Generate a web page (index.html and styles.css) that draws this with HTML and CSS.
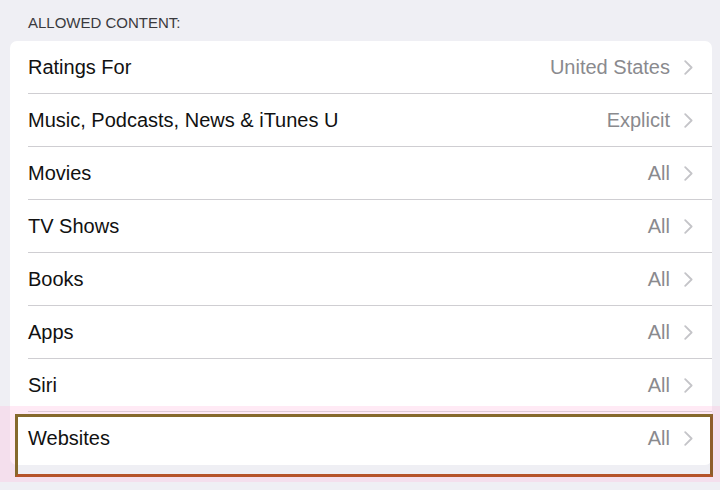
FILE: index.html
```html
<!DOCTYPE html>
<html lang="en">
<head>
    <meta charset="UTF-8">
    <title>Allowed Content</title>
    <link rel="stylesheet" href="styles.css">
</head>
<body>
    <div class="section-title">ALLOWED CONTENT:</div>
    <div class="card">
        <div class="row">
            <span class="label">Ratings For</span>
            <span class="value">United States</span>
            <svg class="chevron" width="9" height="15" viewBox="0 0 9 15"><path d="M1.2 1.2 L7.6 7.5 L1.2 13.8" fill="none" stroke="#c4c4c8" stroke-width="1.8" stroke-linecap="round" stroke-linejoin="round"/></svg>
        </div>
        <div class="row">
            <span class="label">Music, Podcasts, News &amp; iTunes U</span>
            <span class="value">Explicit</span>
            <svg class="chevron" width="9" height="15" viewBox="0 0 9 15"><path d="M1.2 1.2 L7.6 7.5 L1.2 13.8" fill="none" stroke="#c4c4c8" stroke-width="1.8" stroke-linecap="round" stroke-linejoin="round"/></svg>
        </div>
        <div class="row">
            <span class="label">Movies</span>
            <span class="value">All</span>
            <svg class="chevron" width="9" height="15" viewBox="0 0 9 15"><path d="M1.2 1.2 L7.6 7.5 L1.2 13.8" fill="none" stroke="#c4c4c8" stroke-width="1.8" stroke-linecap="round" stroke-linejoin="round"/></svg>
        </div>
        <div class="row">
            <span class="label">TV Shows</span>
            <span class="value">All</span>
            <svg class="chevron" width="9" height="15" viewBox="0 0 9 15"><path d="M1.2 1.2 L7.6 7.5 L1.2 13.8" fill="none" stroke="#c4c4c8" stroke-width="1.8" stroke-linecap="round" stroke-linejoin="round"/></svg>
        </div>
        <div class="row">
            <span class="label">Books</span>
            <span class="value">All</span>
            <svg class="chevron" width="9" height="15" viewBox="0 0 9 15"><path d="M1.2 1.2 L7.6 7.5 L1.2 13.8" fill="none" stroke="#c4c4c8" stroke-width="1.8" stroke-linecap="round" stroke-linejoin="round"/></svg>
        </div>
        <div class="row">
            <span class="label">Apps</span>
            <span class="value">All</span>
            <svg class="chevron" width="9" height="15" viewBox="0 0 9 15"><path d="M1.2 1.2 L7.6 7.5 L1.2 13.8" fill="none" stroke="#c4c4c8" stroke-width="1.8" stroke-linecap="round" stroke-linejoin="round"/></svg>
        </div>
        <div class="row">
            <span class="label">Siri</span>
            <span class="value">All</span>
            <svg class="chevron" width="9" height="15" viewBox="0 0 9 15"><path d="M1.2 1.2 L7.6 7.5 L1.2 13.8" fill="none" stroke="#c4c4c8" stroke-width="1.8" stroke-linecap="round" stroke-linejoin="round"/></svg>
        </div>
        <div class="row last">
            <span class="label">Websites</span>
            <span class="value">All</span>
            <svg class="chevron" width="9" height="15" viewBox="0 0 9 15"><path d="M1.2 1.2 L7.6 7.5 L1.2 13.8" fill="none" stroke="#c4c4c8" stroke-width="1.8" stroke-linecap="round" stroke-linejoin="round"/></svg>
            <!-- highlight drawn over the Websites row -->
            <div class="mark"><div class="mark-box"></div></div>
        </div>
    </div>
</body>
</html>
```

FILE: styles.css
```css
html, body {
    margin: 0;
    height: 100%;
    background: #efeff4;
    font-family: "Liberation Sans", Arial, sans-serif;
    overflow: hidden;
}

.section-title {
    padding: 14px 0 0 28px;
    font-size: 15px;
    line-height: 18px;
    color: #3a3a3e;
    margin-bottom: 9px;
}

.card {
    background: #fff;
    margin: 0 8px 0 10px;
    border-radius: 7px;
}

.row {
    position: relative;
    display: flex;
    align-items: center;
    height: 52px;
    margin-left: 18px;
    padding-right: 19px;
    border-bottom: 1px solid #cfced2;
}

.row.last {
    border-bottom: none;
    height: 53px;
}

.label {
    flex: 1;
    font-size: 20px;
    color: #111;
}

.value {
    font-size: 20px;
    color: #8a8a8e;
    margin-right: 14px;
}

.chevron {
    display: block;
}

.mark {
    position: absolute;
    top: -6px;
    left: -28px;
    right: -8px;
    bottom: -17px;
    overflow: hidden;
    pointer-events: none;
}

.mark-box {
    position: absolute;
    top: 8px;
    left: 15px;
    right: 7px;
    bottom: 5px;
    border: 3px solid #86692c;
    border-right-color: #8d5c2a;
    border-bottom-color: #b5532a;
    box-shadow: 0 0 0 60px rgba(255, 190, 225, 0.32);
}
```
